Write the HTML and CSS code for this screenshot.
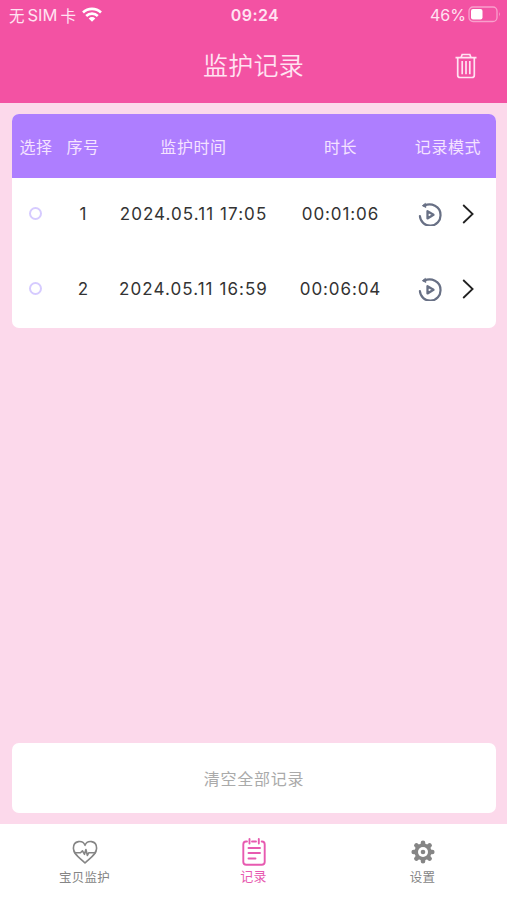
FILE: index.html
```html
<!DOCTYPE html>
<html lang="zh-CN">
<head>
<meta charset="utf-8">
<title>监护记录</title>
<link rel="stylesheet" href="styles.css">
</head>
<body>
<svg class="defs" width="0" height="0" aria-hidden="true">
  <symbol id="replay" viewBox="0 0 24 24">
    <path d="M6.500 3.600C13 .6 22.500 4 22.500 12.800A10.300 10.300 0 0 1 1.900 14" fill="none" stroke="currentColor" stroke-width="2.200" stroke-linecap="round"/>
    <path d="M4.400 3.700 7.400 1.400 7.800 5.400Z" fill="currentColor" stroke="currentColor" stroke-linejoin="round"/>
    <path d="M9.500 9.200v7.200l6-3.600Z" fill="none" stroke="currentColor" stroke-width="2.300" stroke-linejoin="round"/>
  </symbol>
  <symbol id="chevron" viewBox="0 0 12 20">
    <path d="M1.200 1 10.600 10 1.200 19" fill="none" stroke="currentColor" stroke-width="1.800"/>
  </symbol>
</svg>
<header class="header">
  <div class="status">
    <div class="carrier"><span>无</span><span class="sim">SIM</span><span>卡</span>
      <svg class="wifi" viewBox="0 0 20 15" width="20" height="15"><g fill="none" stroke="currentColor" stroke-width="2.600"><path d="M1 5.500a13 13 0 0 1 18 0"/><path d="M4.200 9a8.300 8.300 0 0 1 11.600 0"/></g><path d="M6.700 11.400a4.700 4.700 0 0 1 6.600 0L10 14.800Z" fill="currentColor"/></svg>
    </div>
    <div class="clock">09:24</div>
    <div class="power"><span>46%</span>
      <svg viewBox="0 0 33 17" width="33" height="17"><rect x="1" y="1" width="28" height="14.500" rx="4" fill="none" stroke="currentColor" stroke-width="1.300" opacity=".45"/><rect x="3" y="3" width="11.500" height="10.500" rx="2" fill="currentColor"/><path d="M31 6q1.800 2.200 0 4.500Z" fill="currentColor" opacity=".5"/></svg>
    </div>
  </div>
  <div class="nav">
    <h1 class="title">监护记录</h1>
    <svg class="trash" viewBox="0 0 22 26" width="22" height="26"><g fill="none" stroke="currentColor" stroke-width="1.700"><path d="M.5 4.700h21M6 4.500 7.200 1.500h7.600L16 4.500M2.700 5v17.200q0 2.300 2.300 2.300h12q2.300 0 2.300-2.300V5M7.200 8v13.300M11 8v13.300M14.800 8v13.300"/></g></svg>
  </div>
</header>
<main class="main">
  <section class="records">
    <div class="row head"><span>选择</span><span>序号</span><span>监护时间</span><span>时长</span><span>记录模式</span></div>
    <div class="row">
      <i class="radio"></i><span class="idx">1</span><span class="date">2024.05.11 17:05</span><span class="length">00:01:06</span>
      <span class="mode"><svg class="replay"><use href="#replay"/></svg><svg class="chevron"><use href="#chevron"/></svg></span>
    </div>
    <div class="row">
      <i class="radio"></i><span class="idx">2</span><span class="date">2024.05.11 16:59</span><span class="length">00:06:04</span>
      <span class="mode"><svg class="replay"><use href="#replay"/></svg><svg class="chevron"><use href="#chevron"/></svg></span>
    </div>
  </section>
  <button class="clear">清空全部记录</button>
</main>
<nav class="tabs">
  <a class="tab">
    <svg viewBox="0 0 26 28" width="26" height="28"><g fill="none" stroke="currentColor" stroke-width="1.600" stroke-linejoin="round"><path d="M13 7.300C10.800 1.700 1.400 2.200 1.400 10.300 1.400 16.500 8 20 13 25 18 20 24.600 16.500 24.600 10.300 24.600 2.200 15.200 1.700 13 7.300Z"/><path d="M2 14.800h6.500l2-2 2 3.500 1.400-4.800 1.500 6 1.300-2.700H24"/></g></svg>
    <span>宝贝监护</span>
  </a>
  <a class="tab active">
    <svg viewBox="0 0 26 28" width="26" height="28"><g fill="none" stroke="currentColor" stroke-width="1.900" stroke-linecap="round"><path d="M6 3.500H5Q2.300 3.500 2.300 6.500V24q0 2.700 3 2.700h15.400q3 0 3-2.700V6.500q0-3-2.700-3h-.3M11 3.500h4M8.500 1v4.500M17.800 1v4.500M7.500 10h11.500M7.500 15h11.500M7.500 20.500h7"/></g></svg>
    <span>记录</span>
  </a>
  <a class="tab">
    <svg viewBox="0 0 26 28" width="26" height="28"><g stroke="currentColor" stroke-width="4.600" stroke-linecap="round"><path d="M13 4.700v18.600M3.700 14h18.600M6.400 7.400l13.200 13.200M19.600 7.400 6.400 20.600"/></g><circle cx="13" cy="14" r="8.500" fill="currentColor"/><circle cx="13" cy="14" r="5" fill="#fff"/><circle cx="13" cy="14" r="2.300" fill="currentColor"/></svg>
    <span>设置</span>
  </a>
</nav>
</body>
</html>
```

FILE: styles.css
```css
* { box-sizing: border-box; }
body {
  margin: 0;
  height: 900px;
  display: flex;
  flex-direction: column;
  background: #fcd9eb;
  font-family: Inter, "Noto Sans CJK SC", sans-serif;
  color: #333;
}
.defs { position: absolute; }
svg { display: block; flex: none; }
.header { height: 103px; background: #f352a3; color: #ffe3f2; }
.status {
  height: 29px;
  display: grid;
  grid-template-columns: 1fr auto 1fr;
  align-items: center;
  padding: 0 6px 0 9px;
  font-size: 16px;
}
.carrier, .power { display: flex; align-items: center; }
.carrier { font-size: 15.500px; }
.sim { margin: 0 3px 0 3px; font-size: 16.500px; }
.wifi { margin-left: 6px; color: #fff; }
.clock { font-weight: 600; font-size: 16px; letter-spacing: .4px; }
.power { justify-content: flex-end; gap: 2px; font-size: 16px; }
.power svg { color: #fff; }
.nav {
  height: 74px;
  display: grid;
  grid-template-columns: 1fr auto 1fr;
  align-items: center;
  padding-right: 30px;
  padding-left: 30px;
}
.title { grid-column: 2; margin: 1px 0 0; font-size: 25px; font-weight: 350; letter-spacing: .3px; line-height: 73px; }
.trash { justify-self: end; }
.main { flex: 1; display: flex; flex-direction: column; justify-content: space-between; padding: 11px 11px 11px 12px; }
.records { height: 214px; border-radius: 7px; overflow: hidden; background: #fff; }
.row {
  height: 75px;
  padding-bottom: 4px;
  display: grid;
  grid-template-columns: 48px 46px 175px 119px 96px;
  align-items: center;
  justify-items: center;
  font-size: 17px;
  white-space: nowrap;
}
.head { height: 64px; padding: 0 0 1px; background: #ae7eff; color: #f5e3ff; font-size: 16px; letter-spacing: .6px; }
.radio { width: 13px; height: 13px; margin-right: 1px; border: 2px solid #d6cbff; border-radius: 50%; }
.date { letter-spacing: 1.060px; }
.length { letter-spacing: .9px; }
.mode { display: flex; align-items: center; gap: 20px; margin-right: 5px; }
.replay { width: 24px; height: 24px; color: #687085; }
.chevron { width: 12px; height: 20px; color: #222; }
.clear {
  height: 70px;
  border: 0;
  border-radius: 7px;
  background: #fff;
  color: #aaa;
  font: inherit;
  font-size: 16px;
  letter-spacing: .75px;
}
.tabs { height: 76px; display: grid; grid-template-columns: repeat(3, 1fr); background: #fff; }
.tab {
  display: flex;
  flex-direction: column;
  align-items: center;
  padding-top: 14px;
  gap: 2px;
  color: #858585;
  font-size: 12.500px;
  letter-spacing: .3px;
  line-height: 19px;
}
.active { color: #e75ab0; font-size: 13px; line-height: 16px; }
```
